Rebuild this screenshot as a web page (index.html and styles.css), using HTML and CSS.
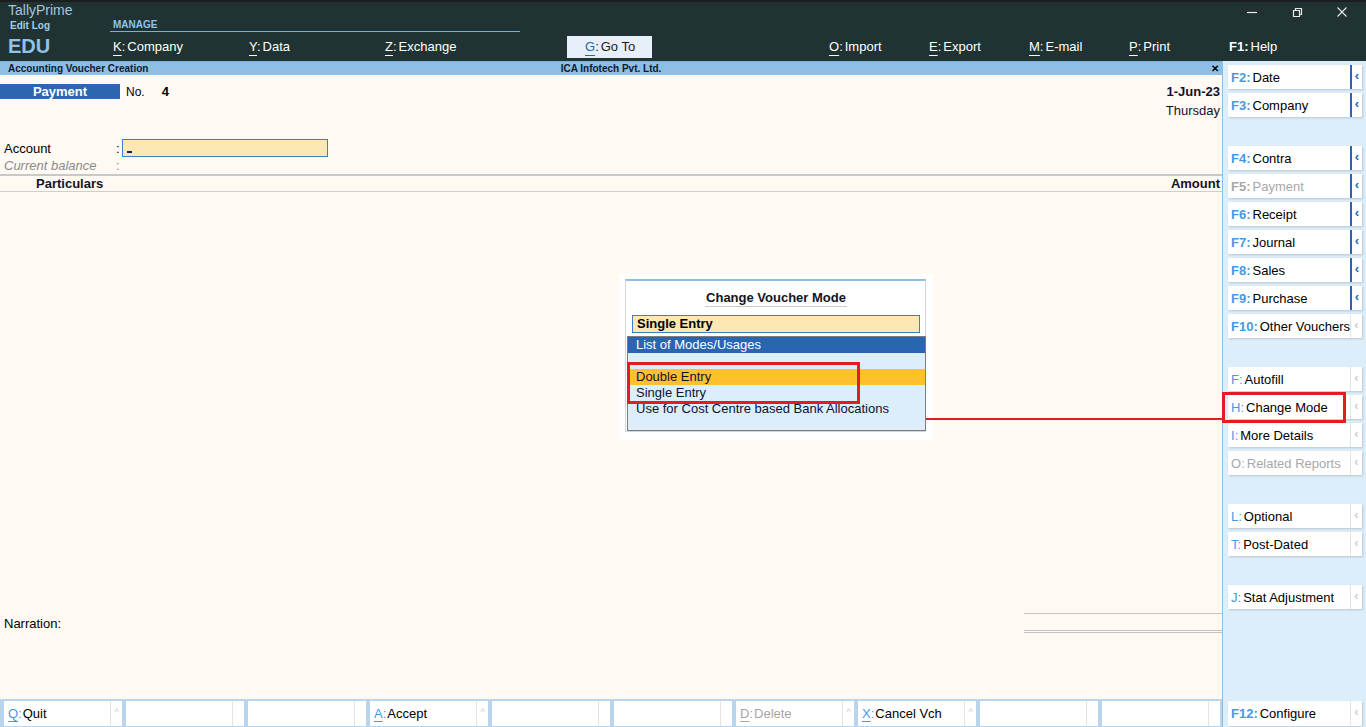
FILE: index.html
```html
<!DOCTYPE html>
<html lang="en">
<head>
    <meta charset="UTF-8">
    <meta name="viewport" content="width=device-width, initial-scale=1.0">
    <title>TallyPrime - Accounting Voucher Creation</title>
    <link rel="stylesheet" href="styles.css">
</head>
<body>
    <div class="app">
        <header class="topbar">
            <div class="brand">
                <div class="brand-name">TallyPrime</div>
                <div class="brand-log">Edit Log</div>
                <div class="brand-co">EDU</div>
            </div>
            <div class="menu">
                <div class="menu-top">
                    <div class="manage">MANAGE</div>
                    <div class="winctl">
                        <svg width="12" height="12" viewBox="0 0 12 12"><path d="M1 6.5h10" stroke="#e8e8e8" stroke-width="1.2"/></svg>
                        <svg width="12" height="12" viewBox="0 0 12 12"><path d="M2.5 4.5h6v6h-6z M4.5 4.5V2.5h6v6h-2" fill="none" stroke="#e8e8e8" stroke-width="1.2"/></svg>
                        <svg width="12" height="12" viewBox="0 0 12 12"><path d="M1.5 1.5l9 9M10.5 1.5l-9 9" stroke="#e8e8e8" stroke-width="1.1"/></svg>
                    </div>
                </div>
                <nav class="menu-row">
                    <div class="mi w136"><u>K</u>:<span>Company</span></div>
                    <div class="mi w136"><u>Y</u>:<span>Data</span></div>
                    <div class="mi w182"><u>Z</u>:<span>Exchange</span></div>
                    <div class="mi goto"><u>G</u>:<span>Go To</span></div>
                    <div class="mi w100"><u>O</u>:<span>Import</span></div>
                    <div class="mi w100"><u>E</u>:<span>Export</span></div>
                    <div class="mi w100"><u>M</u>:<span>E-mail</span></div>
                    <div class="mi w100"><u>P</u>:<span>Print</span></div>
                    <div class="mi"><b>F1:</b><span>Help</span></div>
                </nav>
            </div>
        </header>

        <div class="workspace">
            <div class="screen">
                <div class="titlebar">
                    <span class="tb-left">Accounting Voucher Creation</span>
                    <span class="tb-mid">ICA Infotech Pvt. Ltd.</span>
                    <span class="tb-close">&#x2715;</span>
                </div>

                <main class="voucher">
                    <div class="vch-head">
                        <div class="vch-type">
                            <div class="type-box">Payment</div>
                            <span class="vch-no">No.</span>
                            <b class="vch-num">4</b>
                        </div>
                        <div class="vch-date">
                            <div class="date">1-Jun-23</div>
                            <div class="day">Thursday</div>
                        </div>
                    </div>

                    <div class="acct">
                        <div class="acct-label">Account</div>
                        <div class="acct-colon">:</div>
                        <div class="acct-input"><span class="cursor"></span></div>
                        <div class="acct-label muted">Current balance</div>
                        <div class="acct-colon muted">:</div>
                        <div></div>
                    </div>

                    <div class="grid-head">
                        <span class="col-part">Particulars</span>
                        <span class="col-amt">Amount</span>
                    </div>

                    <div class="grid-body"></div>

                    <div class="narration">
                        <span>Narration:</span>
                        <div class="total-lines"></div>
                    </div>
                </main>

                <footer class="buttonbar">
                    <div class="bbtn"><span class="bl"><u class="k">Q</u><span class="k">:</span>Quit</span><span class="bc">^</span></div>
                    <div class="bbtn"><span class="bl"></span><span class="bc"></span></div>
                    <div class="bbtn"><span class="bl"></span><span class="bc"></span></div>
                    <div class="bbtn"><span class="bl"><u class="k">A</u><span class="k">:</span>Accept</span><span class="bc">^</span></div>
                    <div class="bbtn"><span class="bl"></span><span class="bc"></span></div>
                    <div class="bbtn"><span class="bl"></span><span class="bc"></span></div>
                    <div class="bbtn off"><span class="bl"><u class="k">D</u><span class="k">:</span>Delete</span><span class="bc">^</span></div>
                    <div class="bbtn"><span class="bl"><u class="k">X</u><span class="k">:</span>Cancel Vch</span><span class="bc">^</span></div>
                    <div class="bbtn"><span class="bl"></span><span class="bc"></span></div>
                    <div class="bbtn"><span class="bl"></span><span class="bc"></span></div>
                </footer>
            </div>

            <aside class="sidebar">
                <div class="fbtn act"><span class="fl"><b class="fk">F2:</b>Date</span><span class="fc">&#8249;</span></div>
                <div class="fbtn act"><span class="fl"><b class="fk">F3:</b>Company</span><span class="fc">&#8249;</span></div>

                <div class="fbtn act gap30"><span class="fl"><b class="fk">F4:</b>Contra</span><span class="fc">&#8249;</span></div>
                <div class="fbtn act off"><span class="fl"><b class="fk">F5:</b>Payment</span><span class="fc">&#8249;</span></div>
                <div class="fbtn act"><span class="fl"><b class="fk">F6:</b>Receipt</span><span class="fc">&#8249;</span></div>
                <div class="fbtn act"><span class="fl"><b class="fk">F7:</b>Journal</span><span class="fc">&#8249;</span></div>
                <div class="fbtn act"><span class="fl"><b class="fk">F8:</b>Sales</span><span class="fc">&#8249;</span></div>
                <div class="fbtn act"><span class="fl"><b class="fk">F9:</b>Purchase</span><span class="fc">&#8249;</span></div>
                <div class="fbtn"><span class="fl"><b class="fk">F10:</b>Other Vouchers</span><span class="fc">&#8249;</span></div>

                <div class="fbtn gap29"><span class="fl"><u class="fk">F</u><span class="fk">:</span>Autofill</span><span class="fc">&#8249;</span></div>
                <div class="fbtn"><span class="fl"><u class="fk">H</u><span class="fk">:</span>Change Mode</span><span class="fc">&#8249;</span></div>
                <div class="fbtn"><span class="fl"><u class="fk">I</u><span class="fk">:</span>More Details</span><span class="fc">&#8249;</span></div>
                <div class="fbtn off"><span class="fl"><u class="fk">O</u><span class="fk">:</span>Related Reports</span><span class="fc">&#8249;</span></div>

                <div class="fbtn gap29"><span class="fl"><u class="fk">L</u><span class="fk">:</span>Optional</span><span class="fc">&#8249;</span></div>
                <div class="fbtn"><span class="fl"><u class="fk">T</u><span class="fk">:</span>Post-Dated</span><span class="fc">&#8249;</span></div>

                <div class="fbtn gap29"><span class="fl"><u class="fk">J</u><span class="fk">:</span>Stat Adjustment</span><span class="fc">&#8249;</span></div>

                <div class="fbtn cfg"><span class="fl"><b class="fk">F12:</b>Configure</span><span class="fc">&#8249;</span></div>
            </aside>
        </div>

        <!-- popup -->
        <div class="popup-wrap">
            <div class="popup">
                <div class="popup-title"><span>Change Voucher Mode</span></div>
                <div class="popup-input">Single Entry</div>
                <div class="popup-list">
                    <div class="list-head">List of Modes/Usages</div>
                    <div class="list-row"></div>
                    <div class="list-row sel">Double Entry</div>
                    <div class="list-row">Single Entry</div>
                    <div class="list-row">Use for Cost Centre based Bank Allocations</div>
                </div>
            </div>
        </div>

        <!-- annotation marks -->
        <div class="mark mark-list"></div>
        <div class="mark mark-btn"></div>
        <div class="mark-line"></div>
    </div>
</body>
</html>
```

FILE: styles.css
```css
* {
    box-sizing: border-box;
}

body {
    margin: 0;
    font-family: 'Liberation Sans', Arial, sans-serif;
    font-size: 13px;
    color: #000;
    background: #fef9f3;
}

.app {
    position: relative;
    width: 1366px;
    height: 727px;
    display: flex;
    flex-direction: column;
    overflow: hidden;
}

/* top bar */
.topbar {
    height: 61px;
    display: flex;
    background: #203332;
    border-top: 2px solid #1b1e1e;
}

.brand {
    width: 110px;
    padding-left: 8px;
}

.brand-name {
    color: #a9c4da;
    font-size: 14px;
    height: 17px;
    line-height: 16px;
}

.brand-log {
    color: #9fcdf2;
    font-size: 10px;
    font-weight: bold;
    padding-left: 2px;
    height: 13px;
    line-height: 13px;
}

.brand-co {
    color: #8ec3ec;
    font-size: 20px;
    font-weight: bold;
    line-height: 26px;
    margin-top: 1px;
}

.menu {
    flex: 1;
    display: flex;
    flex-direction: column;
}

.menu-top {
    height: 30px;
    display: flex;
    justify-content: space-between;
}

.manage {
    width: 410px;
    color: #8ec3ec;
    font-size: 10px;
    font-weight: bold;
    padding: 17px 0 0 3px;
    border-bottom: 1px solid #77b0dc;
}

.winctl {
    display: flex;
    gap: 33px;
    padding: 4px 18px 0 0;
    height: 18px;
}

.menu-row {
    flex: 1;
    display: flex;
    align-items: center;
    padding-left: 3px;
}

.mi {
    color: #fff;
    font-size: 13px;
    white-space: nowrap;
}

.mi u {
    text-underline-offset: 4px;
}

.mi span {
    margin-left: 2px;
}

.w136 { width: 136px; }
.w182 { width: 182px; }
.w100 { width: 100px; }

.goto {
    width: 85px;
    height: 22px;
    line-height: 22px;
    padding-left: 18px;
    margin-right: 177px;
    background: #e6f0fa;
    color: #1a1a1a;
}

.goto u {
    color: #2a66b0;
}

/* workspace */
.workspace {
    flex: 1;
    display: flex;
    min-height: 0;
}

.screen {
    width: 1222px;
    display: flex;
    flex-direction: column;
    border-top: 1px solid #7fb3dd;
}

.titlebar {
    height: 13px;
    background: #8cbee6;
    display: flex;
    align-items: center;
    font-size: 10px;
    font-weight: bold;
    color: #0e1a2c;
    position: relative;
    padding: 0 8px;
}

.tb-mid {
    position: absolute;
    left: 0;
    right: 0;
    text-align: center;
    pointer-events: none;
}

.tb-close {
    margin-left: auto;
    font-size: 10px;
    color: #000;
    margin-right: -5px;
}

/* voucher */
.voucher {
    flex: 1;
    display: flex;
    flex-direction: column;
    background: #fef9f3;
}

.vch-head {
    height: 64px;
    display: flex;
    justify-content: space-between;
    padding-top: 9px;
}

.vch-type {
    display: flex;
    align-items: center;
    height: 15px;
}

.type-box {
    width: 120px;
    height: 15px;
    line-height: 15px;
    background: #2b67b1;
    color: #fff;
    font-weight: bold;
    text-align: center;
}

.vch-no {
    margin-left: 6px;
    font-size: 12px;
}

.vch-num {
    margin-left: 17px;
}

.vch-date {
    text-align: right;
    padding-right: 2px;
    color: #0e1230;
}

.date {
    font-weight: bold;
    line-height: 16px;
}

.day {
    line-height: 19px;
    margin-top: 1px;
}

.acct {
    display: grid;
    grid-template-columns: 112px 6px 206px;
    grid-auto-rows: 17px;
    padding-left: 4px;
    align-items: center;
}

.acct-label {
    line-height: 17px;
    padding-top: 2px;
}

.acct-colon {
    padding-top: 2px;
}

.muted {
    color: #8a8a8a;
    font-style: italic;
}

.acct-colon.muted {
    font-style: normal;
}

.acct-input {
    height: 18px;
    background: #fde8b4;
    border: 1px solid #3a80c8;
    position: relative;
}

.cursor {
    position: absolute;
    left: 4px;
    bottom: 3px;
    width: 5px;
    height: 2px;
    background: #10205a;
}

.grid-head {
    margin-top: 1px;
    height: 18px;
    border-top: 2px solid #c8c8c8;
    border-bottom: 1px solid #cfcfcf;
    display: flex;
    justify-content: space-between;
    align-items: center;
    font-weight: bold;
    color: #101428;
    padding: 0 2px 0 36px;
}

.grid-body {
    flex: 1;
}

.narration {
    display: flex;
    justify-content: space-between;
    align-items: center;
    margin-bottom: 66px;
    padding-left: 4px;
}

.total-lines {
    width: 198px;
    height: 20px;
    border-top: 1px solid #c4c4c4;
    border-bottom: 3px double #c4c4c4;
}

/* bottom buttons */
.buttonbar {
    height: 28px;
    background: #b9d5ee;
    display: flex;
    gap: 4px;
    padding: 2px 0 1px 4px;
}

.bbtn {
    width: 118px;
    background: #fff;
    display: flex;
    align-items: center;
}

.bl {
    flex: 1;
    padding-left: 4px;
    white-space: nowrap;
}

.bc {
    width: 12px;
    height: 100%;
    border-left: 1px solid #e2e2e2;
    color: #c8c8c8;
    font-size: 9px;
    text-align: center;
    line-height: 22px;
}

.k {
    color: #4a98de;
    margin-right: 1px;
}

u.k {
    margin-right: 0;
    text-underline-offset: 3px;
}

.bbtn.off .bl {
    color: #a6a6a6;
}

.bbtn.off .k {
    color: #a6a6a6;
}

/* side panel */
.sidebar {
    width: 144px;
    background: #ddeefb;
    border-left: 1px solid #8cbee6;
    display: flex;
    flex-direction: column;
    gap: 4px;
    padding: 4px 0 1px 5px;
}

.fbtn {
    width: 134px;
    height: 24px;
    background: #fff;
    display: flex;
    align-items: center;
    box-shadow: 1px 1px 2px rgba(0, 0, 0, 0.18);
    flex-shrink: 0;
}

.fl {
    flex: 1;
    padding-left: 3px;
    white-space: nowrap;
    overflow: hidden;
}

.fk {
    color: #4a98de;
    margin-right: 2px;
}

u.fk {
    margin-right: 0;
    text-underline-offset: 3px;
}

u.fk + .fk {
    margin-right: 2px;
}

.fc {
    width: 12px;
    height: 100%;
    border-left: 1px solid #e4e4e4;
    color: #d0d0d0;
    font-weight: bold;
    text-align: center;
    line-height: 22px;
}

.fbtn.act .fc {
    border-left: 2px solid #2a66b0;
    color: #2a66b0;
}

.fbtn.off .fl,
.fbtn.off .fk {
    color: #a8a8a8;
}

.gap30 { margin-top: 25px; }
.gap29 { margin-top: 25px; }

.fbtn.cfg {
    margin-top: auto;
    height: 25px;
}

/* popup */
.popup-wrap {
    position: absolute;
    left: 619px;
    top: 274px;
    width: 314px;
    height: 166px;
    background: #fff;
    padding: 5px 7px 8px 6px;
}

.popup {
    height: 100%;
    border: 1px solid #d6d6d6;
    border-top: 2px solid #8cbee6;
    display: flex;
    flex-direction: column;
    padding: 0 0 0 1px;
}

.popup-title {
    text-align: center;
    font-weight: bold;
    color: #10141e;
    padding-top: 9px;
    height: 34px;
}

.popup-title span {
    display: inline-block;
    border-bottom: 1px solid #c8c8c8;
    line-height: 15px;
    padding: 0 1px 1px;
}

.popup-input {
    margin: 0 5px 3px 5px;
    height: 18px;
    line-height: 16px;
    background: #fde8b4;
    border: 1px solid #3a80c8;
    font-weight: bold;
    padding-left: 4px;
}

.popup-list {
    flex: 1;
    background: #ddeefb;
    border: 1px solid #7c7c7c;
    margin-right: -1px;
    margin-left: 0;
}

.list-head {
    height: 16px;
    line-height: 16px;
    background: #2a66b0;
    color: #fff;
    padding-left: 8px;
}

.list-row {
    height: 16px;
    line-height: 16px;
    padding-left: 8px;
    color: #0e1230;
}

.list-row.sel {
    background: #fcc12d;
}

/* annotations */
.mark {
    position: absolute;
    border: 3px solid #e31b23;
}

.mark-list {
    left: 627px;
    top: 362px;
    width: 233px;
    height: 42px;
}

.mark-btn {
    left: 1222px;
    top: 392px;
    width: 124px;
    height: 31px;
}

.mark-line {
    position: absolute;
    left: 926px;
    top: 418px;
    width: 297px;
    height: 2px;
    background: #e31b23;
}
```
